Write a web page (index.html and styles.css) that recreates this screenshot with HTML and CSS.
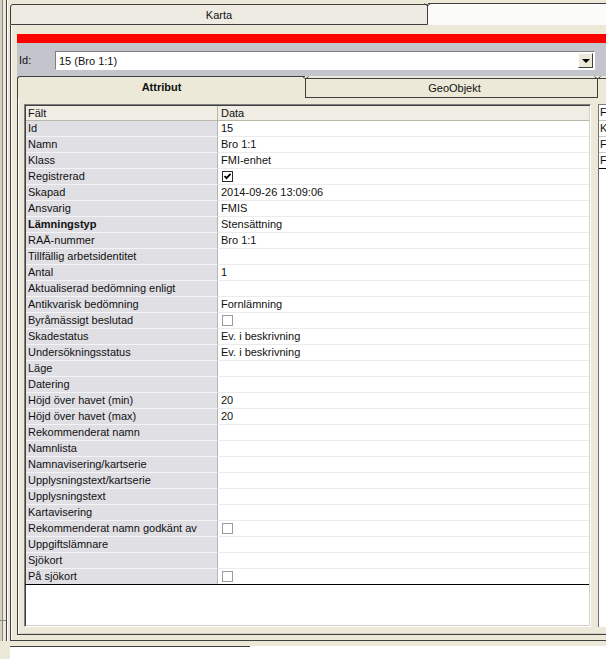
FILE: index.html
```html
<!DOCTYPE html>
<html>
<head>
<meta charset="utf-8">
<link rel="stylesheet" href="styles.css">
</head>
<body>
<div class="window">
  <div class="upper">
    <div class="side"><div class="side-top"></div></div>
    <div class="maintabs">
      <div class="strip">
        <div class="tab-karta">Karta<svg class="notch" width="7" height="5" viewBox="0 0 7 5"><path d="M0.5 0.5 L3.5 3 L6.5 0.5 M3.5 3 V5" fill="none" stroke="#3f3f3f" stroke-width="1"/></svg></div>
        <div class="tab-rest"></div>
      </div>
      <div class="mainpage">
        <div class="redbar"></div>
        <div class="idbar">
          <span class="idlabel">Id:</span>
          <div class="combo">
            <span class="combo-text">15 (Bro 1:1)</span>
            <div class="dropbtn"><span class="arrow"></span></div>
          </div>
        </div>
        <div class="strip2">
          <div class="tab2 sel">Attribut</div>
          <div class="tab2 geo">GeoObjekt<svg class="notch2 left" width="7" height="5" viewBox="0 0 7 5"><path d="M0.5 0.5 L3.5 3 L6.5 0.5 M3.5 3 V5" fill="none" stroke="#3f3f3f" stroke-width="1"/></svg><svg class="notch2 right" width="7" height="5" viewBox="0 0 7 5"><path d="M0.5 0.5 L3.5 3 L6.5 0.5 M3.5 3 V5" fill="none" stroke="#3f3f3f" stroke-width="1"/></svg></div>
          <div class="tab2 more"></div>
        </div>
        <div class="subpage">
          <div class="grid">
            <div class="table">
              <div class="hcell f">Fält</div><div class="hcell d">Data</div>
              <div class="cell f">Id</div><div class="cell d">15</div>
              <div class="cell f">Namn</div><div class="cell d">Bro 1:1</div>
              <div class="cell f">Klass</div><div class="cell d">FMI-enhet</div>
              <div class="cell f">Registrerad</div><div class="cell d"><span class="chk on"><svg width="9" height="9" viewBox="0 0 9 9"><path d="M1.5 4 L3.5 6.2 L7.5 1.8" fill="none" stroke="#000" stroke-width="1.8"/></svg></span></div>
              <div class="cell f">Skapad</div><div class="cell d">2014-09-26 13:09:06</div>
              <div class="cell f">Ansvarig</div><div class="cell d">FMIS</div>
              <div class="cell f bold">Lämningstyp</div><div class="cell d">Stensättning</div>
              <div class="cell f">RAÄ-nummer</div><div class="cell d">Bro 1:1</div>
              <div class="cell f">Tillfällig arbetsidentitet</div><div class="cell d"></div>
              <div class="cell f">Antal</div><div class="cell d">1</div>
              <div class="cell f">Aktualiserad bedömning enligt</div><div class="cell d"></div>
              <div class="cell f">Antikvarisk bedömning</div><div class="cell d">Fornlämning</div>
              <div class="cell f">Byråmässigt beslutad</div><div class="cell d"><span class="chk"></span></div>
              <div class="cell f">Skadestatus</div><div class="cell d">Ev. i beskrivning</div>
              <div class="cell f">Undersökningsstatus</div><div class="cell d">Ev. i beskrivning</div>
              <div class="cell f">Läge</div><div class="cell d"></div>
              <div class="cell f">Datering</div><div class="cell d"></div>
              <div class="cell f">Höjd över havet (min)</div><div class="cell d">20</div>
              <div class="cell f">Höjd över havet (max)</div><div class="cell d">20</div>
              <div class="cell f">Rekommenderat namn</div><div class="cell d"></div>
              <div class="cell f">Namnlista</div><div class="cell d"></div>
              <div class="cell f">Namnavisering/kartserie</div><div class="cell d"></div>
              <div class="cell f">Upplysningstext/kartserie</div><div class="cell d"></div>
              <div class="cell f">Upplysningstext</div><div class="cell d"></div>
              <div class="cell f">Kartavisering</div><div class="cell d"></div>
              <div class="cell f">Rekommenderat namn godkänt av</div><div class="cell d"><span class="chk"></span></div>
              <div class="cell f">Uppgiftslämnare</div><div class="cell d"></div>
              <div class="cell f">Sjökort</div><div class="cell d"></div>
              <div class="cell f last">På sjökort</div><div class="cell d last"><span class="chk"></span></div>
            </div>
          </div>
          <div class="rpanel">
            <div class="rrow">F</div>
            <div class="rrow">K</div>
            <div class="rrow">F</div>
            <div class="rrow last">F</div>
          </div>
        </div>
      </div>
    </div>
  </div>
  <div class="bottom"></div>
</div>
</body>
</html>
```

FILE: styles.css
```css
html, body {
  margin: 0;
  padding: 0;
}
body {
  width: 606px;
  height: 659px;
  overflow: hidden;
  background: #ECE9D8;
  font-family: "Liberation Sans", Arial, sans-serif;
  font-size: 11px;
  color: #111;
}
.window {
  display: flex;
  flex-direction: column;
  height: 659px;
}
.upper {
  display: flex;
  height: 641px;
  flex: none;
}
.side {
  width: 10px;
  flex: none;
  background: linear-gradient(to right, #d4d0c8 0 2px, #8a877c 2px 3px, #ECE9D8 3px 6px, #404040 6px 7px, #ffffff 7px 8px, #ECE9D8 8px 10px);
}
.side-top {
  height: 620px;
  border-bottom: 1px solid #8a877c;
  width: 6px;
}
.maintabs {
  flex: 1;
  min-width: 0;
  display: flex;
  flex-direction: column;
}
.strip {
  display: flex;
  height: 22px;
  margin-top: 3px;
  flex: none;
}
.tab-karta {
  position: relative;
  width: 418px;
  box-sizing: border-box;
  margin-top: 1px;
  height: 21px;
  border: 1px solid #3f3f3f;
  border-radius: 3px 0 0 0;
  background: #EEECE2;
  text-align: center;
  line-height: 20px;
}
.notch {
  position: absolute;
  right: -4px;
  top: -2px;
}
.tab-rest {
  flex: 1;
  border-top: 1px solid #3f3f3f;
  background: #FBFBF9;
}
.mainpage {
  flex: 1;
  display: flex;
  flex-direction: column;
  border-left: 1px solid #3f3f3f;
  box-shadow: inset 1px 0 0 #ffffff;
  padding: 9px 0 0 6px;
  border-bottom: 1px solid #3f3f3f;
}
.redbar {
  height: 9px;
  background: #FF0000;
  flex: none;
}
.idbar {
  height: 33px;
  flex: none;
  background: #C4C4CC;
  display: flex;
  align-items: center;
}
.idlabel {
  width: 38px;
  padding-left: 2px;
  box-sizing: border-box;
  margin-top: 1px;
}
.combo {
  width: 540px;
  height: 19px;
  box-sizing: border-box;
  border: 1px solid;
  border-color: #7f7f7f #ffffff #ffffff #7f7f7f;
  background: #fff;
  display: flex;
  align-items: center;
  margin-top: 2px;
}
.combo-text {
  padding-left: 3px;
  flex: 1;
}
.dropbtn {
  width: 15px;
  height: 15px;
  margin-right: 1px;
  box-sizing: border-box;
  border: 1px solid;
  border-color: #ffffff #404040 #404040 #ffffff;
  background: #ECE9D8;
  display: flex;
  align-items: center;
  justify-content: center;
}
.arrow {
  width: 0;
  height: 0;
  border-left: 4px solid transparent;
  border-right: 4px solid transparent;
  border-top: 4px solid #000;
  margin-top: 1px;
}
.strip2 {
  display: flex;
  height: 22px;
  flex: none;
  align-items: flex-end;
}
.tab2 {
  position: relative;
  box-sizing: border-box;
  height: 20px;
  border-top: 1px solid #3f3f3f;
  border-bottom: 1px solid #3f3f3f;
  background: #ECE9D8;
  text-align: center;
  line-height: 18px;
}
.tab2.sel {
  width: 288px;
  height: 22px;
  border-left: 1px solid #3f3f3f;
  border-bottom: none;
  border-radius: 3px 0 0 0;
  font-weight: bold;
  line-height: 21px;
}
.tab2.geo {
  width: 293px;
  padding-left: 6px;
  border-left: 1px solid #3f3f3f;
  border-right: 1px solid #3f3f3f;
}
.tab2.more {
  flex: 1;
  border-bottom: none;
  border-top: 1px solid #3f3f3f;
}
.notch2 {
  position: absolute;
  top: -3px;
}
.notch2.left {
  left: -4px;
}
.notch2.right {
  right: -4px;
}
.subpage {
  flex: 1;
  display: flex;
  align-items: flex-start;
  gap: 7px;
  border-left: 1px solid #3f3f3f;
  border-bottom: 1px solid #3f3f3f;
  box-shadow: inset 1px 0 0 #ffffff, inset 0 -1px 0 #d4d0c8;
  padding: 6px 0 0 6px;
  margin-bottom: 5px;
}
.grid {
  width: 567px;
  height: 523px;
  box-sizing: border-box;
  flex: none;
  background: #fff;
  border: 1px solid;
  border-color: #7f7f7f #ffffff #ffffff #7f7f7f;
  box-shadow: inset 1px 1px 0 #404040, inset -1px -1px 0 #d4d0c8;
}
.table {
  display: grid;
  grid-template-columns: 193px 1fr;
  border-bottom: 1px solid #000;
  margin-right: 1px;
}
.hcell, .cell {
  height: 16px;
  box-sizing: border-box;
  line-height: 15px;
  padding-left: 3px;
  white-space: nowrap;
  overflow: hidden;
}
.hcell {
  background: #EFEDE4;
  border-bottom: 1px solid #B9B6AA;
  margin-top: 1px;
  height: 15px;
  line-height: 14px;
}
.hcell.f {
  margin-left: 1px;
  padding-left: 2px;
  border-right: 1px solid #B9B6AA;
}
.cell.f {
  background: #E0DFE3;
  border-bottom: 1px solid #F4F3F6;
  border-right: 1px solid #B5B4BA;
  margin-left: 1px;
  padding-left: 2px;
}
.cell.d {
  border-bottom: 1px solid #EBEBEB;
  display: flex;
  align-items: center;
}
.cell.last {
  border-bottom: none;
  height: 15px;
}
.bold {
  font-weight: bold;
}
.chk {
  width: 11px;
  height: 11px;
  box-sizing: border-box;
  border: 1px solid #9C9C9C;
  background: #fff;
  display: flex;
  align-items: center;
  justify-content: center;
  margin-left: 1px;
}
.chk.on {
  border-color: #2b2b2b;
}
.rpanel {
  flex: 1;
  height: 523px;
  box-sizing: border-box;
  border-left: 1px solid #6f6f6f;
  border-top: 1px solid #7f7f7f;
  background: #fff;
  overflow: hidden;
  min-width: 0;
}
.rrow {
  height: 16px;
  box-sizing: border-box;
  line-height: 15px;
  padding-left: 1px;
  border-bottom: 1px solid #c9c7c0;
  white-space: nowrap;
}
.rrow.last {
  border-bottom: 1px solid #000;
}
.bottom {
  flex: 1;
  margin-top: 5px;
  margin-left: 10px;
  background: linear-gradient(#404040, #404040) no-repeat 0 0 / 240px 1px, #ffffff;
}
```
